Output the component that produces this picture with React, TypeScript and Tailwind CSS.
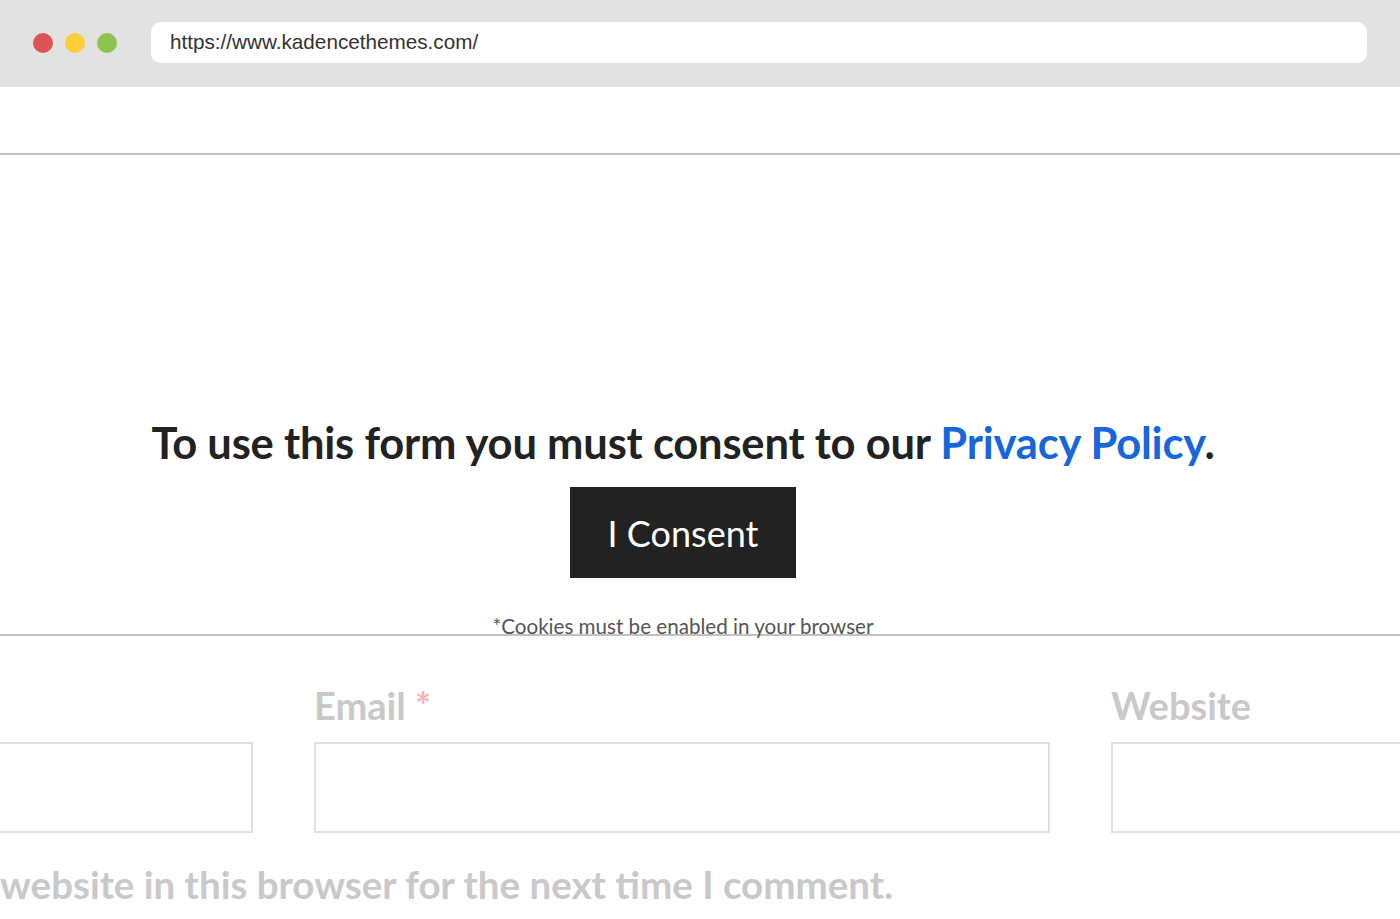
export default function App() {
  return (
    <div className="w-[1400px] h-[919px] overflow-hidden bg-white flex flex-col">
      {/* Browser chrome */}
      <div className="h-[87px] shrink-0 bg-[#e2e2e2] flex items-center pl-[33px] pr-[33px] pb-[2px]">
        <div className="flex items-center gap-[12px]">
          <span className="w-[20px] h-[20px] rounded-full bg-[#dd5454]" />
          <span className="w-[20px] h-[20px] rounded-full bg-[#fdcd3a]" />
          <span className="w-[20px] h-[20px] rounded-full bg-[#8dc44e]" />
        </div>
        <div className="ml-[34px] flex-1 h-[41px] bg-white rounded-[10px] flex items-center pl-[19px] pb-[2px] text-[20.7px] text-[#333] font-['Liberation_Sans',Arial,sans-serif]">
          https://www.kadencethemes.com/
        </div>
      </div>

      <div className="h-[66px] shrink-0" />

      {/* Consent overlay */}
      <div className="h-[483px] shrink-0 border-t-2 border-b-2 border-[#c2c2c2] flex flex-col items-center justify-end pr-[34px] font-['Lato','Noto_Sans',sans-serif]">
        <h2 className="text-[43.5px] font-bold text-[#222] leading-none tracking-[-0.2px] whitespace-nowrap">
          To use this form you must consent to our{" "}
          <a className="text-[#1766dc]">Privacy Policy</a>.
        </h2>
        <button className="mt-[23px] w-[226px] h-[91px] bg-[#222] text-white text-[36px] flex items-center justify-center">
          I Consent
        </button>
        <p className="mt-[38px] mb-[-3px] text-[20.6px] text-[#555] leading-none">
          *Cookies must be enabled in your browser
        </p>
      </div>

      {/* Faded form behind */}
      <div className="flex-1 font-['Lato','Noto_Sans',sans-serif] font-bold">
        <div className="grid grid-cols-[736px_736px_736px] gap-x-[61px] ml-[-483px] mt-[50px]">
          <div>
            <div className="h-[36px]" />
            <div className="mt-[20px] h-[91px] border-2 border-[#e0e0e0]" />
          </div>
          <div>
            <div className="h-[36px] text-[38px] leading-none text-[#c9c9c9] whitespace-nowrap">
              Email <span className="text-[#f7b6b6]">*</span>
            </div>
            <div className="mt-[20px] h-[91px] border-2 border-[#e0e0e0]" />
          </div>
          <div>
            <div className="h-[36px] text-[38px] leading-none text-[#c9c9c9]">Website</div>
            <div className="mt-[20px] h-[91px] border-2 border-[#e0e0e0]" />
          </div>
        </div>
        <p className="mt-[32px] text-[38.5px] leading-none text-[#c9c9c9] whitespace-nowrap">
          website in this browser for the next time I comment.
        </p>
      </div>
    </div>
  );
}
